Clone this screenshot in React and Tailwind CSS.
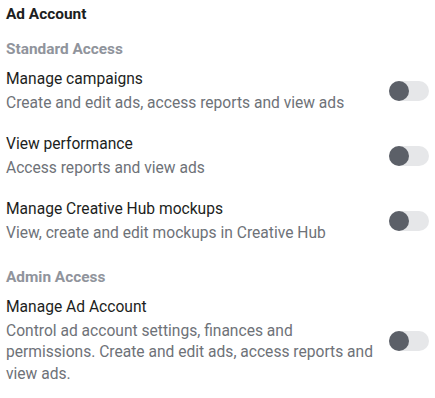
import React from "react";

function Toggle() {
  return (
    <div className="relative h-[20px] w-[40px] shrink-0 rounded-full bg-[#e6e7e9]">
      <div className="absolute left-0 top-0 h-[20px] w-[20px] rounded-full bg-[#5c6068]" />
    </div>
  );
}

function Item({ title, desc }) {
  return (
    <div className="flex items-center justify-between">
      <div className="pr-[6px]">
        <div className="text-[15.6px] leading-[22px] text-[#1c1e21]">{title}</div>
        <div className="mt-[2.5px] text-[15.6px] leading-[21.6px] text-[#6e7278]">{desc}</div>
      </div>
      <Toggle />
    </div>
  );
}

export default function App() {
  return (
    <div
      className="h-[398px] w-[435px] bg-white px-[6px] pt-[3px]"
      style={{ fontFamily: "Roboto, 'Noto Sans', sans-serif" }}
    >
      <div className="text-[15.4px] font-bold leading-[22px] text-[#1c1e21]">Ad Account</div>
      <div className="mt-[13px] text-[15.4px] font-bold leading-[22px] text-[#90949c]">Standard Access</div>
      <div className="mt-[8px] flex flex-col gap-[19px]">
        <Item title="Manage campaigns" desc="Create and edit ads, access reports and view ads" />
        <Item title="View performance" desc="Access reports and view ads" />
        <Item title="Manage Creative Hub mockups" desc="View, create and edit mockups in Creative Hub" />
      </div>
      <div className="mt-[22px] text-[15.4px] font-bold leading-[22px] text-[#90949c]">Admin Access</div>
      <div className="mt-[8px]">
        <Item
          title="Manage Ad Account"
          desc="Control ad account settings, finances and permissions. Create and edit ads, access reports and view ads."
        />
      </div>
    </div>
  );
}
